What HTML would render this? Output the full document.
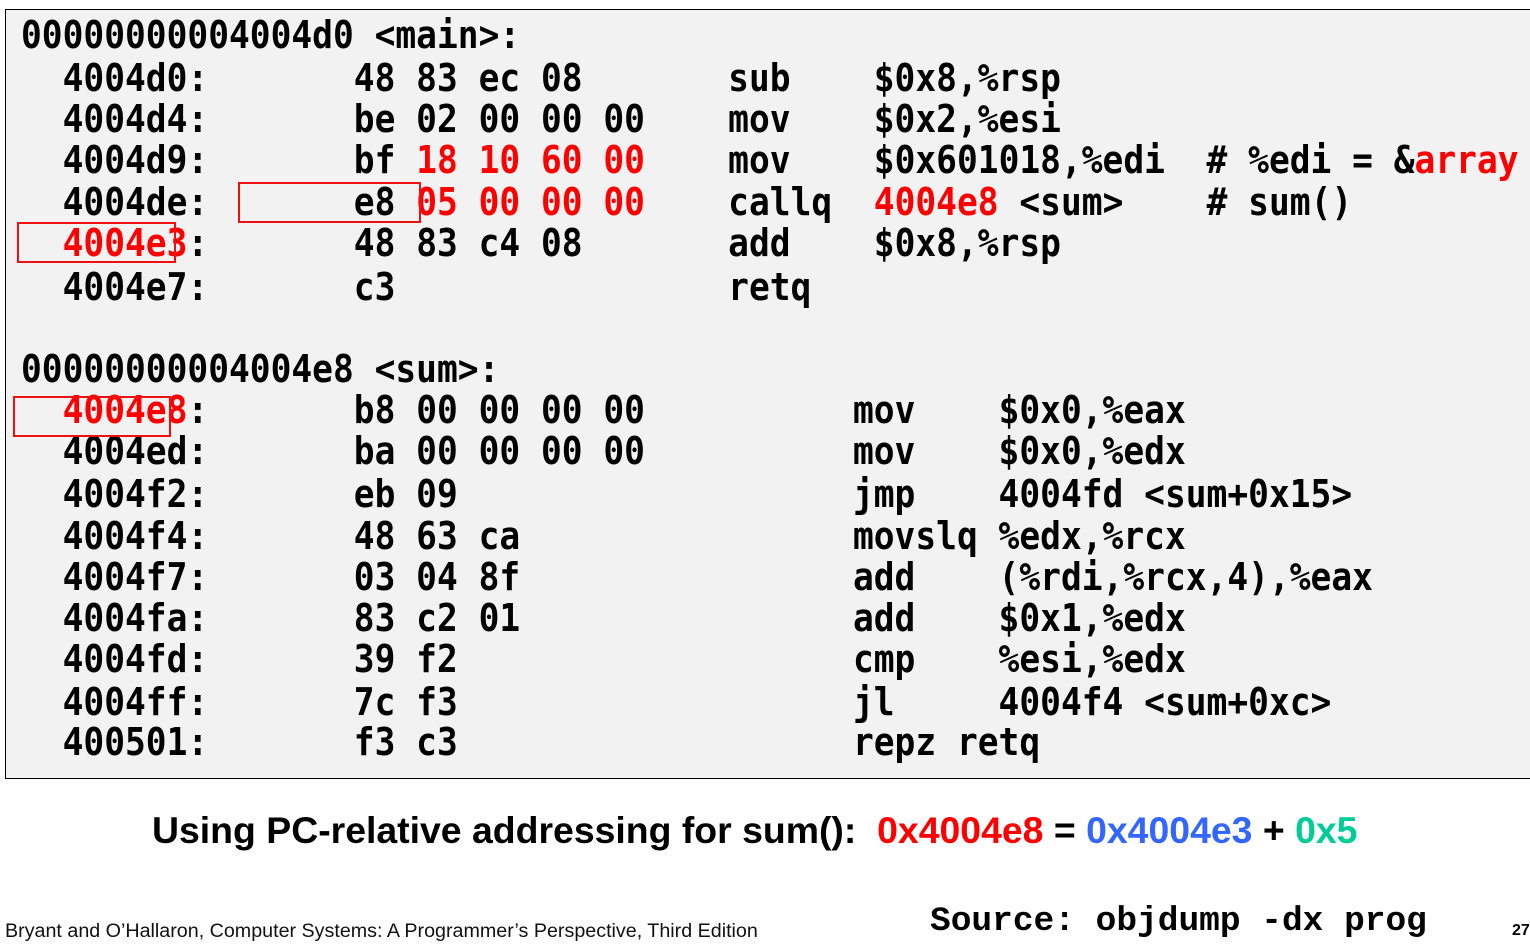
<!DOCTYPE html>
<html><head><meta charset="utf-8"><style>
html,body{margin:0;padding:0;background:#fff;width:1530px;height:946px;overflow:hidden;position:relative}
.box{position:absolute;left:5px;top:9px;width:1530px;height:770px;background:#f2f2f2;border:1px solid #000;box-sizing:border-box}
.l{position:absolute;left:21px;height:40px;line-height:40px;font-family:"DejaVu Sans Mono",monospace;font-weight:bold;font-size:34.55px;white-space:pre;color:#000;transform:scaleY(1.1);transform-origin:left center}
.r{color:#ff0000}
.rb{position:absolute;border:2px solid #ee1111;box-sizing:border-box}
.cap{position:absolute;left:152px;top:809px;font-family:"Liberation Sans",sans-serif;font-weight:bold;font-size:37.4px;white-space:nowrap}
.foot{position:absolute;left:5px;top:920px;font-family:"Liberation Sans",sans-serif;font-size:19.7px;white-space:nowrap;color:#111}
.src{position:absolute;left:930px;top:902px;font-family:"Liberation Mono",monospace;font-weight:bold;font-size:34.5px;white-space:pre}
</style></head><body>
<div class="box"></div>
<div class="l" style="top:16px">00000000004004d0 &lt;main&gt;:</div>
<div class="l" style="top:59px">  4004d0:       48 83 ec 08       sub    $0x8,%rsp</div>
<div class="l" style="top:100px">  4004d4:       be 02 00 00 00    mov    $0x2,%esi</div>
<div class="l" style="top:141px">  4004d9:       bf <span class="r">18 10 60 00</span>    mov    $0x601018,%edi  # %edi = &amp;<span class="r">array</span></div>
<div class="l" style="top:183px">  4004de:       e8 <span class="r">05 00 00 00</span>    callq  <span class="r">4004e8</span> &lt;sum&gt;    # sum()</div>
<div class="l" style="top:224px">  <span class="r">4004e3</span>:       48 83 c4 08       add    $0x8,%rsp</div>
<div class="l" style="top:268px">  4004e7:       c3                retq</div>
<div class="l" style="top:350px">00000000004004e8 &lt;sum&gt;:</div>
<div class="l" style="top:391px">  <span class="r">4004e8</span>:       b8 00 00 00 00          mov    $0x0,%eax</div>
<div class="l" style="top:432px">  4004ed:       ba 00 00 00 00          mov    $0x0,%edx</div>
<div class="l" style="top:475px">  4004f2:       eb 09                   jmp    4004fd &lt;sum+0x15&gt;</div>
<div class="l" style="top:517px">  4004f4:       48 63 ca                movslq %edx,%rcx</div>
<div class="l" style="top:558px">  4004f7:       03 04 8f                add    (%rdi,%rcx,4),%eax</div>
<div class="l" style="top:599px">  4004fa:       83 c2 01                add    $0x1,%edx</div>
<div class="l" style="top:640px">  4004fd:       39 f2                   cmp    %esi,%edx</div>
<div class="l" style="top:683px">  4004ff:       7c f3                   jl     4004f4 &lt;sum+0xc&gt;</div>
<div class="l" style="top:723px">  400501:       f3 c3                   repz retq</div>
<div class="rb" style="left:238px;top:182px;width:183px;height:41px"></div>
<div class="rb" style="left:17px;top:222px;width:159px;height:41px"></div>
<div class="rb" style="left:13px;top:396px;width:158px;height:41px"></div>
<div class="cap">Using PC-relative addressing for sum():&nbsp; <span style="color:#ff0000">0x4004e8</span> = <span style="color:#3366ff">0x4004e3</span> + <span style="color:#00cc99">0x5</span></div>
<div class="foot">Bryant and O’Hallaron, Computer Systems: A Programmer’s Perspective, Third Edition</div>
<div class="src">Source: objdump -dx prog</div>
<div style="position:absolute;left:1512px;top:922px;font-family:'Liberation Sans',sans-serif;font-weight:bold;font-size:16px">27</div>
</body></html>
